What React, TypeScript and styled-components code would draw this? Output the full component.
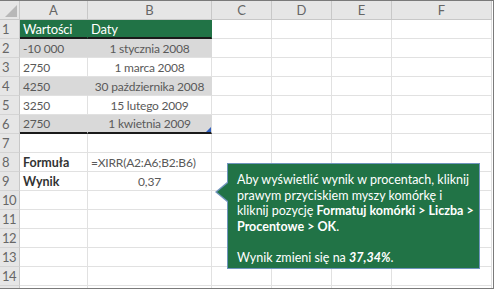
import styled, { createGlobalStyle } from "styled-components";

const GlobalStyle = createGlobalStyle`
  html, body {
    margin: 0;
    padding: 0;
    background: #ffffff;
  }
  body {
    font-family: Lato, "Liberation Sans", sans-serif;
  }
`;

const COLUMNS = ["A", "B", "C", "D", "E", "F"];

type Row = {
  a?: string;
  b?: string;
  fill?: "head" | "band" | "none";
  boldA?: boolean;
  alignB?: "left" | "center";
  underline?: boolean;
  handle?: boolean;
};

const rows: Row[] = [
  { a: "Wartości", b: "Daty", fill: "head", alignB: "left", underline: true },
  { a: "-10 000", b: "1 stycznia 2008", fill: "band" },
  { a: "2750", b: "1 marca 2008" },
  { a: "4250", b: "30 października 2008", fill: "band" },
  { a: "3250", b: "15 lutego 2009" },
  { a: "2750", b: "1 kwietnia 2009", fill: "band", underline: true, handle: true },
  {},
  { a: "Formuła", b: "=XIRR(A2:A6;B2:B6)", boldA: true, alignB: "left" },
  { a: "Wynik", b: "0,37", boldA: true },
  {},
  {},
  {},
  {},
  {},
  {},
];

const App = () => {
  return (
    <>
      <GlobalStyle />
      <Sheet>
        <Grid>
          <Corner>
            <svg width="14" height="14" viewBox="0 0 14 14">
              <polygon points="14,2 14,14 2,14" fill="#b8b8b8" />
            </svg>
          </Corner>
          {COLUMNS.map((c) => (
            <ColHead key={c}>{c}</ColHead>
          ))}
          {rows.map((r, i) => (
            <RowGroup key={i}>
              <RowHead>{i < 14 ? i + 1 : ""}</RowHead>
              <Cell $fill={r.fill} $bold={r.boldA} $underline={r.underline}>
                {r.a}
              </Cell>
              <Cell
                $fill={r.fill}
                $align={r.alignB ?? "center"}
                $underline={r.underline}
              >
                {r.b}
                {r.handle && <Handle />}
              </Cell>
              {COLUMNS.slice(2).map((c) => (
                <Cell key={c} />
              ))}
            </RowGroup>
          ))}
        </Grid>
        <Callout>
          <Line>Aby wyświetlić wynik w procentach, kliknij</Line>
          <Line>prawym przyciskiem myszy komórkę i</Line>
          <Line>
            kliknij pozycję <b>Formatuj komórki &gt; Liczba &gt;</b>
          </Line>
          <Line>
            <b>Procentowe &gt; OK</b>.
          </Line>
          <Line />
          <Line>
            Wynik zmieni się na{" "}
            <b>
              <i>37,34%</i>
            </b>
            .
          </Line>
        </Callout>
      </Sheet>
    </>
  );
};

const Sheet = styled.div`
  position: relative;
  width: 494px;
  height: 289px;
  box-sizing: border-box;
  border-top: 1px solid #7a7a7a;
  border-right: 1px solid #7a7a7a;
  border-bottom: 1px solid #7a7a7a;
  overflow: hidden;
`;

const Grid = styled.div`
  display: grid;
  grid-template-columns: 20px 68px 124px 60px 60px 60px 100px;
  grid-auto-rows: 19px;
  font-size: 12px;
  color: #595959;
`;

const RowGroup = styled.div`
  display: contents;
`;

const Corner = styled.div`
  background: #e6e6e6;
  border-right: 1px solid #c8c8c8;
  border-bottom: 1px solid #c8c8c8;
  display: flex;
  align-items: flex-end;
  justify-content: flex-end;
  padding: 0 2px 2px 0;
  box-sizing: border-box;
`;

const ColHead = styled.div`
  background: #e6e6e6;
  border-right: 1px solid #c8c8c8;
  border-bottom: 1px solid #c8c8c8;
  box-sizing: border-box;
  display: flex;
  align-items: center;
  justify-content: center;
  font-size: 13px;
  color: #666666;
`;

const RowHead = styled.div`
  background: #e6e6e6;
  border-right: 1px solid #c8c8c8;
  border-bottom: 1px solid #d4d4d4;
  box-sizing: border-box;
  display: flex;
  align-items: center;
  padding-left: 2px;
  font-size: 13px;
  color: #666666;
  letter-spacing: -0.5px;
`;

const Cell = styled.div<{
  $fill?: "head" | "band" | "none";
  $bold?: boolean;
  $align?: "left" | "center";
  $underline?: boolean;
}>`
  position: relative;
  box-sizing: border-box;
  display: flex;
  align-items: center;
  justify-content: ${(p) => (p.$align === "center" ? "center" : "flex-start")};
  padding: 0 3px;
  white-space: nowrap;
  letter-spacing: ${(p) => (p.$bold ? "0" : "-0.2px")};
  border-right: 1px solid
    ${(p) => (p.$fill === "head" ? "#217346" : p.$fill === "band" ? "#d9d9d9" : "#e1e1e1")};
  border-bottom: ${(p) => (p.$underline ? "2px solid #1a1a1a" : "1px solid #e1e1e1")};
  background: ${(p) =>
    p.$fill === "head" ? "#217346" : p.$fill === "band" ? "#d9d9d9" : "#ffffff"};
  color: ${(p) => (p.$fill === "head" ? "#ffffff" : p.$bold ? "#333333" : "#595959")};
  font-size: ${(p) => (p.$fill === "head" ? "13px" : p.$bold ? "12.5px" : "12px")};
  font-weight: ${(p) => (p.$bold ? 700 : 400)};
`;

const Handle = styled.span`
  position: absolute;
  right: 0;
  bottom: 0;
  width: 0;
  height: 0;
  border-left: 5px solid transparent;
  border-bottom: 5px solid #2f5fbf;
`;

const Callout = styled.div`
  position: absolute;
  left: 227px;
  top: 162px;
  width: 253px;
  height: 106px;
  box-sizing: border-box;
  padding: 8px 8px 0 9px;
  background: #217346;
  border: 1px solid #7094bd;
  color: #ffffff;
  font-size: 12.5px;
  b {
    font-weight: 700;
  }
  &::before {
    content: "";
    position: absolute;
    left: -13px;
    top: 18px;
    border-top: 10px solid transparent;
    border-bottom: 10px solid transparent;
    border-right: 12px solid #7094bd;
  }
  &::after {
    content: "";
    position: absolute;
    left: -11px;
    top: 19px;
    border-top: 9px solid transparent;
    border-bottom: 9px solid transparent;
    border-right: 11px solid #217346;
  }
`;

const Line = styled.div`
  height: 15.5px;
  line-height: 15.5px;
  white-space: nowrap;
`;

export default App;
